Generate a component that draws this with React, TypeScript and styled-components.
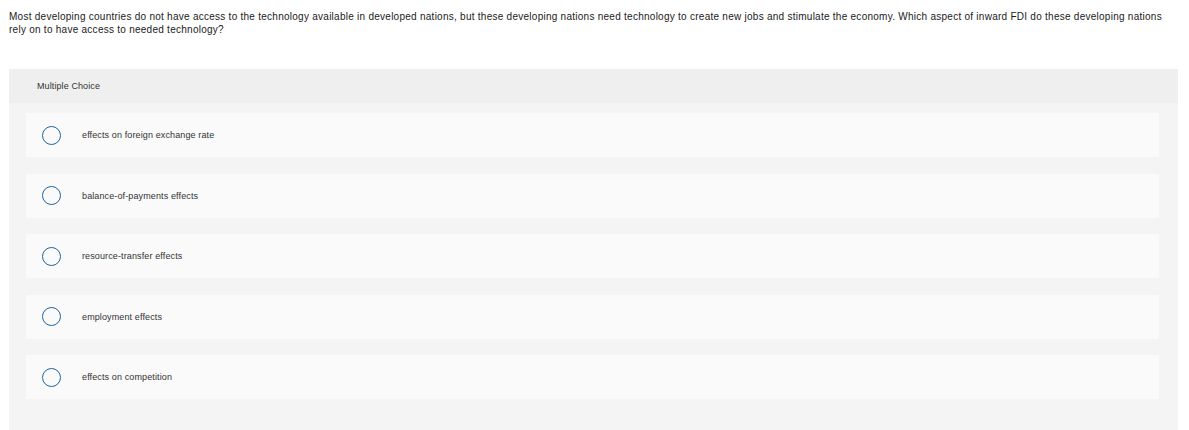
import React from "react";
import styled, { createGlobalStyle } from "styled-components";

const Global = createGlobalStyle`
  html, body { margin: 0; padding: 0; background: #ffffff; }
  body { font-family: "Liberation Sans", Arial, sans-serif; color: #222; }
`;

const Page = styled.div`
  padding: 10px 11px 0 9px;
  display: flex;
  flex-direction: column;
`;

const Question = styled.p`
  margin: 0;
  font-size: 10px;
  line-height: 13px;
  letter-spacing: 0.26px;
  color: #1a1a1a;
`;

const Panel = styled.section`
  margin-top: 33px;
  background: #f4f4f4;
  padding-bottom: 40px;
`;

const Header = styled.div`
  height: 34px;
  display: flex;
  align-items: center;
  padding-left: 28px;
  background: #efefef;
  font-size: 9px;
  letter-spacing: 0.1px;
  color: #333;
`;

const Options = styled.ul`
  list-style: none;
  margin: 0;
  padding: 10px 19px 0 17px;
  display: flex;
  flex-direction: column;
  gap: 16.5px;
`;

const Option = styled.li`
  height: 44px;
  background: #fafafa;
  display: flex;
  align-items: center;
  padding-left: 16px;
  font-size: 9px;
  letter-spacing: 0.12px;
  color: #333;
`;

const Radio = styled.span`
  width: 17px;
  height: 17px;
  border: 1.5px solid #2163a0;
  border-radius: 50%;
  flex: none;
  margin-right: 21px;
`;

const choices = [
  "effects on foreign exchange rate",
  "balance-of-payments effects",
  "resource-transfer effects",
  "employment effects",
  "effects on competition",
];

export default function App() {
  return (
    <>
      <Global />
      <Page>
        <Question>
          Most developing countries do not have access to the technology available in developed nations, but these developing nations need technology to create new jobs and stimulate the economy. Which aspect of inward FDI do these developing nations rely on to have access to needed technology?
        </Question>
        <Panel>
          <Header>Multiple Choice</Header>
          <Options>
            {choices.map((c) => (
              <Option key={c}>
                <Radio />
                {c}
              </Option>
            ))}
          </Options>
        </Panel>
      </Page>
    </>
  );
}
